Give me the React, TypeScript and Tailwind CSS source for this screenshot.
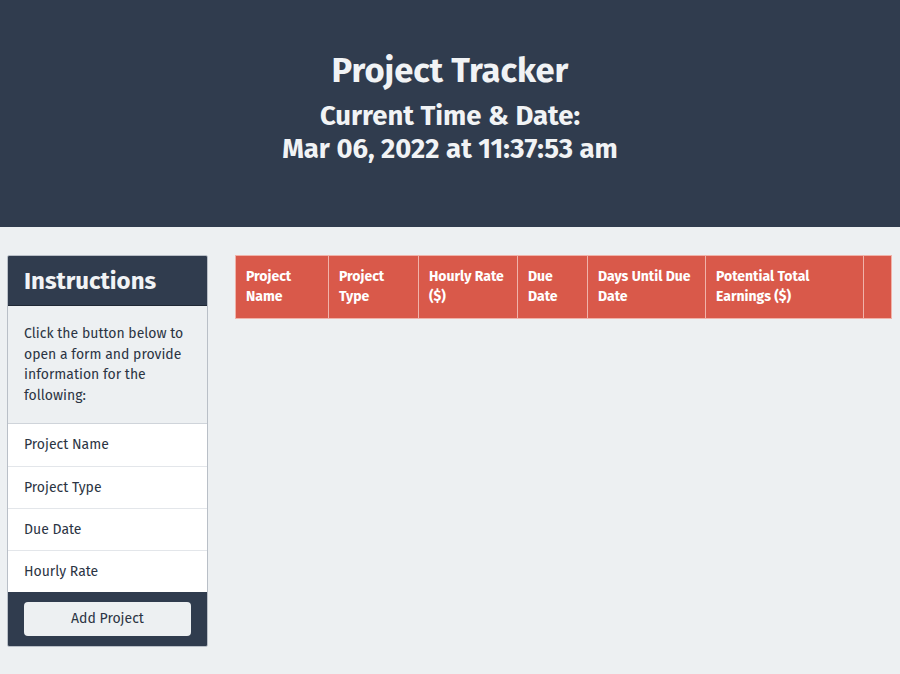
const FIELDS = ["Project Name", "Project Type", "Due Date", "Hourly Rate"];

const COLUMNS = [
  { label: "Project Name", width: "w-[93px]" },
  { label: "Project Type", width: "w-[90px]" },
  { label: "Hourly Rate ($)", width: "w-[99px]" },
  { label: "Due Date", width: "w-[70px]" },
  { label: "Days Until Due Date", width: "w-[118px]" },
  { label: "Potential Total Earnings ($)", width: "w-[158px]" },
  { label: "", width: "w-[28px]" },
];

export default function App() {
  return (
    <div className="min-h-[674px] bg-[#edf0f2] font-['Fira_Sans','Open_Sans',sans-serif] text-[#2b3443]">
      <header className="h-[227px] bg-[#303c4e] flex flex-col items-center pt-[49px] text-[#f1f3f5] font-bold">
        <h1 className="text-[34.5px] leading-[44px]">Project Tracker</h1>
        <h2 className="text-[27.5px] leading-[33px] mt-[6px]">Current Time &amp; Date:</h2>
        <p className="text-[27.5px] leading-[33px]">Mar 06, 2022 at 11:37:53 am</p>
      </header>

      <main className="flex items-start gap-[27px] pt-[28px] pl-[7px]">
        <aside className="w-[201px] border border-[#b9bfc7] rounded-[2px] overflow-hidden">
          <div className="h-[50px] bg-[#303c4e] border-b border-[#1f2835] flex items-center px-[16px]">
            <h3 className="text-[24px] font-bold text-[#f1f3f5]">Instructions</h3>
          </div>
          <p className="px-[16px] pt-[18px] pb-[16px] text-[14px] leading-[20.7px] bg-[#edf0f2]">
            Click the button below to open a form and provide information for the following:
          </p>
          <ul className="bg-white border-t border-[#cfd4da]">
            {FIELDS.map((f, i) => (
              <li
                key={f}
                className={`h-[42px] flex items-center px-[16px] text-[14px] ${i > 0 ? "border-t border-[#e3e6ea]" : ""}`}
              >
                {f}
              </li>
            ))}
          </ul>
          <div className="bg-[#303c4e] h-[54px] flex items-center justify-center">
            <button className="w-[167px] h-[34px] rounded-[4px] bg-[#edf0f2] text-[14px] text-[#2b3443]">
              Add Project
            </button>
          </div>
        </aside>

        <table className="border-collapse">
          <thead>
            <tr className="bg-[#d9594a] text-white h-[63px]">
              {COLUMNS.map((c, i) => (
                <th
                  key={i}
                  className={`${c.width} border border-[#f0b3aa] text-left align-top pt-[11px] px-[10px] text-[14px] leading-[20px] font-bold`}
                >
                  {c.label}
                </th>
              ))}
            </tr>
          </thead>
        </table>
      </main>
    </div>
  );
}
